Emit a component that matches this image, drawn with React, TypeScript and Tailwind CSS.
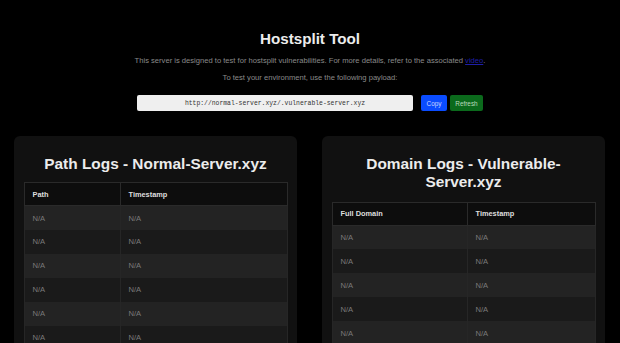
import React from "react";

const rows = Array.from({ length: 10 });

function LogTable({ first, firstWidth }: { first: string; firstWidth: string }) {
  return (
    <table className="w-full table-fixed border-collapse">
      <thead>
        <tr className="h-[23px] bg-[#0d0d0d]">
          <th className={`${firstWidth} border border-[#2a2a2a] pl-[8px] text-left align-middle text-[7.4px] font-bold text-[#dedede]`}>
            {first}
          </th>
          <th className="border border-[#2a2a2a] pl-[8px] text-left align-middle text-[7.4px] font-bold text-[#dedede]">
            Timestamp
          </th>
        </tr>
      </thead>
      <tbody>
        {rows.map((_, i) => (
          <tr key={i} className={`h-[24px] ${i % 2 === 0 ? "bg-[#232323]" : "bg-[#1a1a1a]"}`}>
            <td className="border-x border-[#262626] pl-[8px] align-middle text-[7.6px] text-[#7a7a7a]">N/A</td>
            <td className="border-x border-[#262626] pl-[8px] align-middle text-[7.6px] text-[#7a7a7a]">N/A</td>
          </tr>
        ))}
      </tbody>
    </table>
  );
}

export default function App() {
  return (
    <div className="min-h-screen bg-black font-['Liberation_Sans',Arial,sans-serif] leading-[normal]">
      <div className="flex flex-col items-center text-center">
        <h1 className="mt-[29.6px] text-[15.2px] font-bold text-[#ececec]">Hostsplit Tool</h1>
        <p className="mt-[9.4px] text-[7.6px] text-[#8a8a8a]">
          This server is designed to test for hostsplit vulnerabilities. For more details, refer to the associated{" "}
          <a className="text-[#1f1fa8] underline">video</a>.
        </p>
        <p className="mt-[8.5px] text-[7.6px] text-[#8a8a8a]">To test your environment, use the following payload:</p>
        <div className="mt-[12.6px] flex items-center">
          <input
            readOnly
            value="http://normal-server.xyz/.vulnerable-server.xyz"
            className="h-[16px] w-[276px] rounded-[2px] bg-[#efefef] text-center font-['Liberation_Mono',monospace] text-[6.4px] text-[#333] outline-none"
          />
          <button className="ml-[8px] h-[16px] w-[26px] rounded-[2px] bg-[#0a4cff] text-[6.4px] text-[#c9d6ff]">Copy</button>
          <button className="ml-[3px] h-[16px] w-[33px] rounded-[2px] bg-[#0b6a1c] text-[6.4px] text-[#b9d9bb]">Refresh</button>
        </div>
      </div>
      <div className="mt-[25px] grid grid-cols-2 gap-[25px] pl-[14px] pr-[15px]">
        <div className="rounded-[6px] bg-[#111111] px-[9.5px] pt-[18.5px] pb-[10px]">
          <h2 className="mb-[9.8px] text-center text-[15.4px] font-bold text-[#ececec]">Path Logs - Normal-Server.xyz</h2>
          <LogTable first="Path" firstWidth="w-[96px]" />
        </div>
        <div className="rounded-[6px] bg-[#111111] px-[9.5px] pt-[18.5px] pb-[10px]">
          <h2 className="mb-[11px] text-center text-[15.4px] font-bold text-[#ececec]">Domain Logs - Vulnerable-Server.xyz</h2>
          <LogTable first="Full Domain" firstWidth="w-[135px]" />
        </div>
      </div>
    </div>
  );
}
